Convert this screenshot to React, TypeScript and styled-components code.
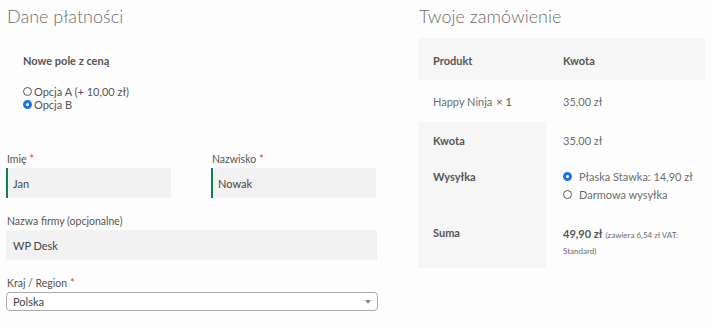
import React from "react";
import styled, { createGlobalStyle } from "styled-components";

const GlobalStyle = createGlobalStyle`
  body {
    margin: 0;
    background: #fdfdfd;
    font-family: "Lato", "Open Sans", sans-serif;
    color: #6d6d6d;
  }
`;

const Page = styled.div`
  width: 712px;
  height: 329px;
  display: grid;
  grid-template-columns: 372px 287px;
  column-gap: 40px;
  padding: 0 0 0 6px;
  box-sizing: border-box;
`;

const Column = styled.div`
  display: flex;
  flex-direction: column;
`;

const Title = styled.h3`
  margin: 4px 0 0 1px;
  font-size: 18px;
  font-weight: 300;
  color: #6d6d6d;
  line-height: 24px;
`;

const ExtraField = styled.div`
  padding: 26px 0 0 17px;
  display: flex;
  flex-direction: column;
`;

const ExtraTitle = styled.div`
  font-size: 11px;
  font-weight: 700;
  color: #555;
  margin-bottom: 18px;
`;

const RadioLine = styled.label`
  display: flex;
  align-items: center;
  gap: 1px;
  font-size: 11px;
  color: #555;
  height: 13px;
`;

const Radio = styled.span<{ checked?: boolean }>`
  width: 9px;
  height: 9px;
  border-radius: 50%;
  box-sizing: border-box;
  border: ${(p) => (p.checked ? "3px solid #1a73e8" : "1px solid #555")};
  background: #fff;
  flex: none;
  margin-right: 1px;
`;

const FieldRow = styled.div`
  display: grid;
  grid-template-columns: 165px 165px;
  column-gap: 40px;
  margin-top: 42px;
`;

const Field = styled.div<{ top?: number }>`
  display: flex;
  flex-direction: column;
  margin-top: ${(p) => p.top ?? 0}px;
`;

const Label = styled.label`
  font-size: 10.5px;
  color: #555;
  line-height: 12px;
  padding-left: 1px;
  margin-bottom: 3px;
`;

const Req = styled.span`
  color: #e2401c;
  margin-left: 3px;
`;

const Input = styled.div<{ valid?: boolean; width?: number }>`
  height: 30px;
  background: #f2f2f2;
  box-sizing: border-box;
  border-left: ${(p) => (p.valid ? "2px solid #0f834d" : "0")};
  padding-left: ${(p) => (p.valid ? 5 : 7)}px;
  display: flex;
  align-items: center;
  font-size: 11px;
  color: #43454b;
  width: ${(p) => (p.width ? `${p.width}px` : "100%")};
`;

const Select = styled.div`
  height: 19px;
  width: 372px;
  box-sizing: border-box;
  border: 1px solid #aaa;
  border-radius: 4px;
  background: #fff;
  display: flex;
  align-items: center;
  justify-content: space-between;
  padding: 0 6px 0 6px;
  font-size: 11px;
  color: #444;
`;

const Arrow = styled.span`
  width: 0;
  height: 0;
  border-left: 3px solid transparent;
  border-right: 3px solid transparent;
  border-top: 4px solid #888;
`;

const OrderTable = styled.table`
  margin-top: 10px;
  border-collapse: collapse;
  table-layout: fixed;
  width: 287px;
  font-size: 11px;
  line-height: 13px;
`;

const Row = styled.tr<{ h: number; shade?: boolean }>`
  height: ${(p) => p.h}px;
  background: ${(p) => (p.shade ? "#f6f6f6" : "transparent")};
`;

const Cell = styled.td<{ pad: number; first?: boolean; bold?: boolean; shade?: boolean }>`
  box-sizing: border-box;
  width: ${(p) => (p.first ? "128px" : "auto")};
  padding: ${(p) => `${p.pad}px 0 0 ${p.first ? 15 : 17}px`};
  font-weight: ${(p) => (p.bold ? 700 : 400)};
  color: ${(p) => (p.bold ? "#555" : "#6d6d6d")};
  background: ${(p) => (p.shade ? "#f6f6f6" : "transparent")};
  text-align: left;
  vertical-align: top;
`;

const Qty = styled.strong`
  font-weight: 600;
  margin-left: 4px;
`;

const ShipList = styled.div`
  display: flex;
  flex-direction: column;
  gap: 5px;
`;

const ShipLine = styled.label`
  display: flex;
  align-items: center;
  gap: 6px;
  color: #6d6d6d;
  font-size: 11px;
  line-height: 13px;
`;

const Total = styled.div`
  line-height: 16px;
`;

const Amount = styled.strong`
  font-weight: 700;
  color: #555;
  margin-right: 3px;
`;

const TaxNote = styled.small<{ block?: boolean }>`
  display: ${(p) => (p.block ? "block" : "inline")};
  font-size: 8px;
  line-height: 16px;
`;

export default function App() {
  return (
    <>
      <GlobalStyle />
      <Page>
        <Column>
          <Title>Dane płatności</Title>
          <ExtraField>
            <ExtraTitle>Nowe pole z ceną</ExtraTitle>
            <RadioLine>
              <Radio />
              Opcja A (+ 10,00 zł)
            </RadioLine>
            <RadioLine>
              <Radio checked />
              Opcja B
            </RadioLine>
          </ExtraField>
          <FieldRow>
            <Field>
              <Label>
                Imię<Req>*</Req>
              </Label>
              <Input valid>Jan</Input>
            </Field>
            <Field>
              <Label>
                Nazwisko<Req>*</Req>
              </Label>
              <Input valid>Nowak</Input>
            </Field>
          </FieldRow>
          <Field top={17}>
            <Label>Nazwa firmy (opcjonalne)</Label>
            <Input width={371}>WP Desk</Input>
          </Field>
          <Field top={17}>
            <Label>
              Kraj / Region<Req>*</Req>
            </Label>
            <Select>
              Polska
              <Arrow />
            </Select>
          </Field>
        </Column>
        <Column>
          <Title>Twoje zamówienie</Title>
          <OrderTable>
            <thead>
              <Row h={42} shade>
                <Cell as="th" pad={16} first bold>
                  Produkt
                </Cell>
                <Cell as="th" pad={16} bold>
                  Kwota
                </Cell>
              </Row>
            </thead>
            <tbody>
              <Row h={42}>
                <Cell pad={15} first>
                  Happy Ninja<Qty>×&nbsp;1</Qty>
                </Cell>
                <Cell pad={15}>35,00 zł</Cell>
              </Row>
            </tbody>
            <tfoot>
              <Row h={36}>
                <Cell as="th" pad={12} first bold shade>
                  Kwota
                </Cell>
                <Cell pad={12}>35,00 zł</Cell>
              </Row>
              <Row h={56}>
                <Cell as="th" pad={12} first bold shade>
                  Wysyłka
                </Cell>
                <Cell pad={12}>
                  <ShipList>
                    <ShipLine>
                      <Radio checked />
                      Płaska Stawka: 14,90 zł
                    </ShipLine>
                    <ShipLine>
                      <Radio />
                      Darmowa wysyłka
                    </ShipLine>
                  </ShipList>
                </Cell>
              </Row>
              <Row h={54}>
                <Cell as="th" pad={12} first bold shade>
                  Suma
                </Cell>
                <Cell pad={12}>
                  <Total>
                    <Amount>49,90 zł</Amount>
                    <TaxNote>(zawiera 6,54 zł VAT:</TaxNote>
                    <TaxNote block>Standard)</TaxNote>
                  </Total>
                </Cell>
              </Row>
            </tfoot>
          </OrderTable>
        </Column>
      </Page>
    </>
  );
}
